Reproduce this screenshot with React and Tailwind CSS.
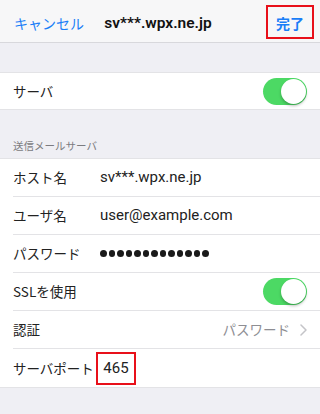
import React from 'react'

const JP = { fontFamily: '"Noto Sans CJK JP", "Noto Sans", sans-serif' }
const LAT = { fontFamily: 'Roboto, "Noto Sans CJK JP", sans-serif' }

function Toggle() {
  return (
    <div className="w-[44px] h-[27px] rounded-full bg-[#4cd964] relative shrink-0">
      <div className="absolute right-[1px] top-[1px] w-[25px] h-[25px] rounded-full bg-white shadow-[0_2px_3px_rgba(0,0,0,0.25)]"/>
    </div>
  )
}

function Row({ label, children, last }) {
  return (
    <div className="pl-[13px]">
      <div className={`h-[38px] flex items-center pr-[13px] ${last ? '' : 'border-b border-[#e3e3e6]'}`}>
        <span className="text-[13.5px] text-[#222] w-[87px] shrink-0" style={JP}>{label}</span>
        <div className="flex-1 flex items-center">{children}</div>
      </div>
    </div>
  )
}

export default function App() {
  return (
    <div className="w-[320px] h-[414px] bg-[#efeff4] overflow-hidden" style={JP}>
      {/* nav */}
      <div className="h-[43px] bg-[#f7f7f8] border-b border-[#d8d8dc] grid grid-cols-[1fr_auto_1fr] items-center">
        <span className="pl-[14px] pt-[5px] text-[14px] text-[#1a7ef7]" style={JP}>キャンセル</span>
        <span className="pt-[5px] pr-[4px] text-[15.5px] font-semibold text-[#111]" style={LAT}>sv***.wpx.ne.jp</span>
        <div className="flex justify-end pr-[6px] pt-[2px]">
          <span className="w-[48px] h-[34px] border-2 border-[#e8101a] flex items-center justify-center pt-[3px] text-[14px] font-bold text-[#1a7ef7]" style={JP}>完了</span>
        </div>
      </div>

      <div className="h-[29px]"/>

      <div className="bg-white border-y border-[#e3e3e6]">
        <div className="h-[36px] flex items-center justify-between pl-[13px] pr-[13px]">
          <span className="text-[13.5px] text-[#222]" style={JP}>サーバ</span>
          <Toggle/>
        </div>
      </div>

      <div className="h-[48px] flex items-end pl-[13px] pb-[4px]">
        <span className="text-[10.5px] text-[#7b7b80]" style={JP}>送信メールサーバ</span>
      </div>

      <div className="bg-white border-y border-[#e3e3e6]">
        <Row label="ホスト名">
          <span className="text-[15px] text-[#222]" style={LAT}>sv***.wpx.ne.jp</span>
        </Row>
        <Row label="ユーザ名">
          <span className="text-[15px] text-[#222]" style={LAT}>user@example.com</span>
        </Row>
        <Row label="パスワード">
          <div className="flex gap-[2px]">
            {Array.from({ length: 13 }).map((_, i) => (
              <div key={i} className="w-[6.5px] h-[6.5px] rounded-full bg-[#1a1a1a]"/>
            ))}
          </div>
        </Row>
        <Row label="SSLを使用">
          <div className="flex-1 flex justify-end"><Toggle/></div>
        </Row>
        <Row label="認証">
          <div className="flex-1 flex justify-end items-center gap-[10px]">
            <span className="text-[13.5px] text-[#8e8e93]" style={JP}>パスワード</span>
            <svg width="7" height="12" viewBox="0 0 7 12" fill="none">
              <path d="M1 1l5 5-5 5" stroke="#c4c4c8" strokeWidth="1.5" strokeLinecap="round" strokeLinejoin="round"/>
            </svg>
          </div>
        </Row>
        <Row label="サーバポート" last>
          <span className="-ml-[4px] w-[40px] h-[33px] border-2 border-[#e8101a] flex items-center justify-center text-[15px] text-[#222]" style={LAT}>465</span>
        </Row>
      </div>
    </div>
  )
}
